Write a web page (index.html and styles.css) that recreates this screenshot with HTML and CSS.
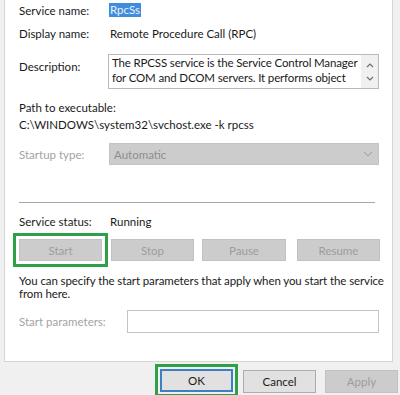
FILE: index.html
```html
<!DOCTYPE html>
<html lang="en">
<head>
  <meta charset="UTF-8">
  <title>RPCSS Properties</title>
  <link rel="stylesheet" href="styles.css">
</head>
<body>
  <div class="panel">
    <div class="row name-row">
      <span class="label">Service name:</span>
      <span class="selected">RpcSs</span>
    </div>
    <div class="row display-row">
      <span class="label">Display name:</span>
      <span>Remote Procedure Call (RPC)</span>
    </div>
    <div class="row desc-row">
      <span class="label">Description:</span>
      <div class="desc-box">
        <div class="desc-text">
          <div>The RPCSS service is the Service Control Manager</div>
          <div>for COM and DCOM servers. It performs object</div>
        </div>
        <div class="scroll">
          <svg width="10" height="28" viewBox="0 0 10 28"><path d="M2 9 L5 6 L8 9" fill="none" stroke="#6e6e6e" stroke-width="1.2"/><path d="M2 19 L5 22 L8 19" fill="none" stroke="#6e6e6e" stroke-width="1.2"/></svg>
        </div>
      </div>
    </div>
    <div class="path-block">
      <div>Path to executable:</div>
      <div>C:\WINDOWS\system32\svchost.exe -k rpcss</div>
    </div>
    <div class="row startup-row">
      <span class="label disabled">Startup type:</span>
      <div class="select">
        <span>Automatic</span>
        <svg width="10" height="6" viewBox="0 0 10 6"><path d="M1 1 L5 5 L9 1" fill="none" stroke="#9a9a9a" stroke-width="1"/></svg>
      </div>
    </div>
    <div class="sep"></div>
    <div class="row status-row">
      <span class="label">Service status:</span>
      <span>Running</span>
    </div>
    <div class="btn-row">
      <div class="highlight"><button class="btn">Start</button></div>
      <button class="btn stop">Stop</button>
      <button class="btn pause">Pause</button>
      <button class="btn resume">Resume</button>
    </div>
    <p class="hint">You can specify the start parameters that apply when you start the service<br>from here.</p>
    <div class="row params-row">
      <span class="label wide disabled">Start parameters:</span>
      <div class="input"></div>
    </div>
  </div>
  <div class="footer">
    <div class="highlight ok-wrap"><button class="fbtn ok">OK</button></div>
    <button class="fbtn cancel">Cancel</button>
    <button class="fbtn off">Apply</button>
  </div>
</body>
</html>
```
FILE: styles.css
```css
body {
  margin: 0;
  background-color: #f0f0f0;
  font-family: "Lato", "Liberation Sans", sans-serif;
  font-size: 11.5px;
  color: #1a1a1a;
  width: 400px;
  height: 395px;
  overflow: hidden;
}
.panel {
  background-color: #fff;
  margin: 0 7px 0 4px;
  border: 1px solid #d6d6d6;
  border-top: none;
  height: 362px;
  padding-left: 14px;
  padding-top: 2px;
  box-sizing: border-box;
}
.row {
  display: flex;
  align-items: center;
  line-height: 15px;
}
.label {
  width: 91px;
  flex-shrink: 0;
}
.label.wide {
  width: 108px;
}
.disabled {
  color: #a3a3a3;
}
.name-row {
  height: 16px;
}
.selected {
  background-color: #3f8ddd;
  color: #eaf2fb;
  padding: 0 1px;
  line-height: 14px;
  margin-left: -1px;
}
.display-row {
  margin-top: 8px;
}
.desc-row {
  margin-top: 13px;
  align-items: flex-start;
}
.desc-row .label {
  padding-top: 5px;
}
.desc-box {
  width: 271px;
  height: 35px;
  border: 1px solid #b9b9b9;
  box-sizing: border-box;
  display: flex;
  margin-left: -2px;
}
.desc-text {
  flex: 1;
  padding: 0 0 0 3px;
  line-height: 15px;
  overflow: hidden;
  white-space: nowrap;
  letter-spacing: -0.15px;
}
.scroll {
  width: 17px;
  background-color: #f0f0f0;
  display: flex;
  justify-content: center;
  align-items: center;
}
.path-block {
  margin-top: 10px;
  line-height: 17px;
}
.startup-row {
  margin-top: 10px;
}
.select {
  width: 270px;
  height: 22px;
  background-color: #cccccc;
  border: 1px solid #c4c4c4;
  box-sizing: border-box;
  display: flex;
  align-items: center;
  justify-content: space-between;
  padding: 0 5px 0 4px;
  color: #8e8e8e;
  margin-left: -1px;
}
.sep {
  height: 1px;
  background-color: #a8a8a8;
  width: 356px;
  margin-top: 37px;
}
.status-row {
  margin-top: 11px;
}
.btn-row {
  display: flex;
  align-items: center;
  margin-top: 4px;
  margin-left: -6px;
}
.highlight {
  border: 3px solid #2ea048;
  padding: 3px;
}
.btn {
  width: 83px;
  height: 22px;
  background-color: #cccccc;
  border: 1px solid #c2c2c2;
  font-family: inherit;
  font-size: 11.5px;
  color: #9d9d9d;
  margin: 0;
  padding: 0;
}
.btn.stop {
  margin-left: 3px;
}
.btn.pause {
  margin-left: 8px;
  width: 84px;
}
.btn.resume {
  margin-left: 11px;
}
.hint {
  margin: 7px 0 0;
  line-height: 13px;
  white-space: nowrap;
  letter-spacing: -0.1px;
}
.params-row {
  margin-top: 10px;
}
.input {
  width: 252px;
  height: 23px;
  border: 1px solid #c4c4c4;
  box-sizing: border-box;
}
.footer {
  display: flex;
  align-items: flex-start;
  margin-top: 2px;
  padding-left: 155px;
}
.ok-wrap {
  padding: 2px;
}
.fbtn {
  width: 73px;
  height: 23px;
  background-color: #e1e1e1;
  border: 1px solid #adadad;
  font-family: inherit;
  font-size: 11.5px;
  color: #1a1a1a;
  margin: 0;
  padding: 0;
}
.fbtn.ok {
  border: 2px solid #3c7fc7;
}
.fbtn.cancel {
  margin: 6px 0 0 5px;
}
.fbtn.off {
  margin: 6px 0 0 9px;
  background-color: #cccccc;
  border-color: #c2c2c2;
  color: #9d9d9d;
}
```
